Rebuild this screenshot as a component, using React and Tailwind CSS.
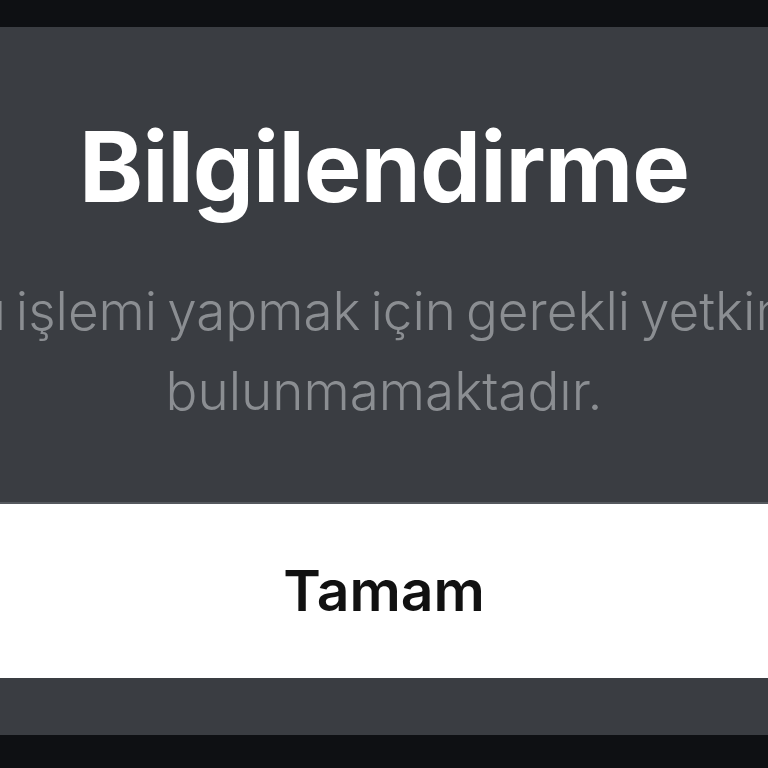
export default function App() {
  return (
    <div
      className="flex h-screen w-full flex-col overflow-hidden bg-[#0e1013]"
      style={{ fontFamily: "Inter, 'Noto Sans', sans-serif" }}
    >
      <div className="h-[27px] shrink-0" />
      <div className="flex h-[708px] shrink-0 flex-col bg-[#3a3d42]">
        <h1 className="mt-[90px] text-center text-[97px] font-bold leading-[100px] tracking-[-0.01em] text-white">
          Bilgilendirme
        </h1>
        <div className="flex justify-center">
          <p className="mt-[54px] w-[930px] shrink-0 text-center text-[53px] font-light leading-[80px] text-[#8b8e92] [word-spacing:-5px]">
            Bu işlemi yapmak için gerekli yetkiniz bulunmamaktadır.
          </p>
        </div>
        <button className="mt-[71px] flex h-[176px] w-full shrink-0 items-center justify-center border-t-2 border-[#55595e] bg-white text-[57px] font-semibold text-[#111]">
          Tamam
        </button>
      </div>
    </div>
  );
}
